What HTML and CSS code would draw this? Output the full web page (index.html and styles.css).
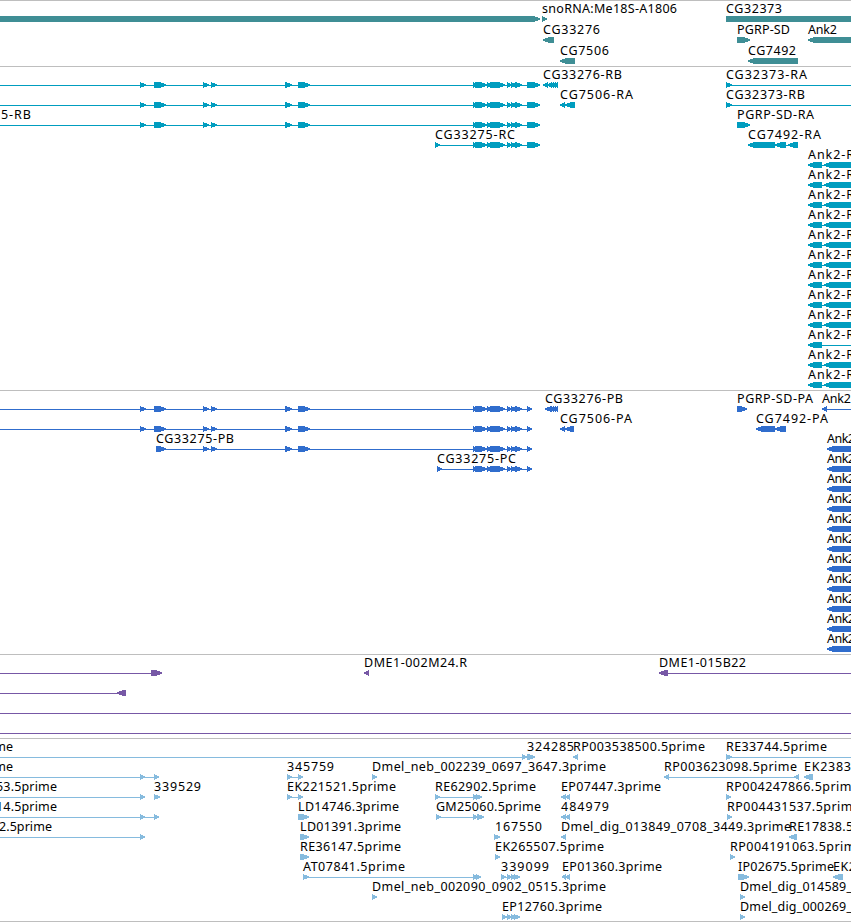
FILE: index.html
```html
<!DOCTYPE html>
<html lang="en">
<head>
  <meta charset="UTF-8">
  <meta name="viewport" content="width=device-width, initial-scale=1.0">
  <title>Genome Browser</title>
  <link rel="stylesheet" href="styles.css">
</head>
<body>
  <main class="browser">
    <svg class="track genes" id="genes"></svg>
    <svg class="track transcripts" id="transcripts"></svg>
    <svg class="track cds" id="cds"></svg>
    <svg class="track bacs" id="bacs"></svg>
    <svg class="track ests" id="ests"></svg>
  </main>
  <script src="tracks.js"></script>
</body>
</html>
```

FILE: styles.css
```css
body {
  margin: 0;
  background: #fff;
  overflow: hidden;
}

.browser {
  display: flex;
  flex-direction: column;
  width: 851px;
  height: 922px;
  box-sizing: border-box;
  border-bottom: 1px solid #bebebe;
}

.track {
  display: block;
  flex: none;
  box-sizing: border-box;
  width: 100%;
  border-top: 1px solid #bebebe;
  overflow: hidden;
}

.track text {
  font-family: "Noto Sans", "DejaVu Sans", sans-serif;
  font-size: 12.5px;
  fill: #000;
}

.track path {
  shape-rendering: crispEdges;
}

.genes {
  height: 66px;
  fill: #3f8e95;
}

.transcripts {
  height: 324px;
  fill: #009dbf;
}

.cds {
  height: 264px;
  fill: #306dcd;
}

.bacs {
  height: 84px;
  fill: #7758a6;
}

.ests {
  height: 183px;
  fill: #86bbde;
}
```

FILE: tracks.js
```js
const SVG = "http://www.w3.org/2000/svg";

// parts that run past the edges of the view
const L = [-30, 5];
const R = [880, 5];

// exons shared by the CG33275 models
const start = [[140, 6], [154, 12]];
const middle = [[203, 6], [211, 6], [285, 7], [298, 12]];
const end = [[473, 6], [475, 12], [487, 5], [490, 15], [507, 5], [511, 6], [515, 7]];

// feature: [row, direction, parts, label, label x, label width]
const genes = [
  [0, ">", [[-30, 570]]],
  [0, ">", [[542, 5]], "snoRNA:Me18S-A1806", 542, 135],
  [0, ">", [[726, 200]], "CG32373", 726, 56],
  [1, "<", [[543, 11]], "CG33276", 543, 57],
  [1, ">", [[737, 13]], "PGRP-SD", 737, 53],
  [1, "<", [[808, 100]], "Ank2", 808, 29],
  [2, "<", [[560, 15]], "CG7506", 560, 49],
  [2, "<", [[748, 50]], "CG7492", 748, 48]
];

const rna = [L, ...start, ...middle, ...end, [527, 13]];
const transcripts = [
  [0, ">", rna],
  [1, ">", rna],
  [2, ">", rna, "5-RB", 1, 30],
  [3, ">", [[435, 5], ...end, [527, 13]], "CG33275-RC", 435, 80],
  [0, "<", [[543, 5], [547, 5], [551, 3], [553, 3], [555, 3]], "CG33276-RB", 543, 79],
  [1, "<", [[560, 5], [565, 10]], "CG7506-RA", 560, 73],
  [0, ">", [[726, 6], R], "CG32373-RA", 726, 81],
  [1, ">", [[726, 6], R], "CG32373-RB", 726, 79],
  [2, ">", [[737, 13]], "PGRP-SD-RA", 737, 77],
  [3, "<", [[748, 27], [775, 11], [788, 10]], "CG7492-RA", 748, 73]
];
for (let row = 4; row < 16; row++) {
  const rest = row === 13 ? R : [824, 100];
  transcripts.push([row, "<", [[808, 14], rest], "Ank2-R", 808, 46]);
}

const cds = [
  [0, ">", [L, ...start, ...middle, ...end, [527, 5]]],
  [1, ">", [L, ...start, ...middle, ...end, [527, 5]]],
  [2, ">", [[156, 10], ...middle, ...end, [527, 5]], "CG33275-PB", 156, 78],
  [3, ">", [[437, 5], ...end, [527, 5]], "CG33275-PC", 437, 79],
  [0, "<", [[545, 6], [549, 3], [551, 3], [553, 3], [555, 3]], "CG33276-PB", 545, 78],
  [1, "<", [[560, 5], [565, 9]], "CG7506-PA", 560, 72],
  [0, ">", [[737, 10]], "PGRP-SD-PA", 737, 76],
  [0, "<", [[822, 5], R], "Ank2", 822, 29],
  [1, "<", [[756, 19], [775, 11]], "CG7492-PA", 756, 72]
];
for (let row = 2; row < 13; row++) {
  cds.push([row, "<", [[827, 100]], "Ank2", 827, 28]);
}

const bacs = [
  [0, ">", [L, [151, 11]]],
  [0, "<", [[364, 5]], "DME1-002M24.R", 364, 103],
  [0, "<", [[659, 9], R], "DME1-015B22", 659, 87],
  [1, "<", [L, [117, 9]]],
  [2, "<", [L, R]],
  [3, "<", [L, R]]
];

const ests = [
  [0, ">", [L, [522, 5], [527, 8]], "prime", -22, 35],
  [0, ">", [], "324285", 527, 47],
  [0, "<", [[573, 5]], "RP003538500.5prime", 573, 132],
  [0, ">", [[726, 6], R], "RE33744.5prime", 726, 101],

  [1, ">", [L, [140, 5], [154, 5]], "prime", -22, 35],
  [1, ">", [[287, 5], [298, 5]], "345759", 287, 47],
  [1, ">", [[372, 5]], "Dmel_neb_002239_0697_3647.3prime", 372, 234],
  [1, "<", [[664, 5], [794, 5]], "RP003623098.5prime", 664, 133],
  [1, "<", [[804, 9]], "EK2383", 804, 47],

  [2, ">", [L, [140, 5]], "53.5prime", -4, 61],
  [2, ">", [[154, 6]], "339529", 154, 47],
  [2, ">", [[287, 5], [298, 5]], "EK221521.5prime", 287, 109],
  [2, ">", [[435, 5], [473, 5], [476, 6]], "RE62902.5prime", 435, 101],
  [2, "<", [[561, 5], [565, 5]], "EP07447.3prime", 561, 100],
  [2, ">", [[726, 5]], "RP004247866.5prime", 726, 133],

  [3, ">", [L, [140, 5], [154, 5]], "14.5prime", -4, 61],
  [3, ">", [[298, 11]], "LD14746.3prime", 298, 101],
  [3, ">", [[436, 5], [473, 5], [477, 7]], "GM25060.5prime", 436, 105],
  [3, "<", [[561, 5], [565, 5]], "484979", 561, 48],
  [3, ">", [[727, 5]], "RP004431537.5prime", 727, 133],

  [4, ">", [L, [140, 5]], "2.5prime", -1, 53],
  [4, ">", [[300, 9]], "LD01391.3prime", 300, 101],
  [4, ">", [[494, 6]], "167550", 495, 47],
  [4, "<", [[561, 5]], "Dmel_dig_013849_0708_3449.3prime", 561, 230],
  [4, "<", [[789, 8]], "RE17838.5prime", 789, 101],

  [5, ">", [[300, 9]], "RE36147.5prime", 300, 101],
  [5, ">", [[495, 5]], "EK265507.5prime", 495, 109],
  [5, ">", [[730, 5]], "RP004191063.5prime", 730, 133],

  [6, ">", [[303, 6], [473, 5], [476, 5]], "AT07841.5prime", 303, 102],
  [6, ">", [[501, 5], [507, 5], [511, 5], [514, 6]], "339099", 501, 48],
  [6, "<", [[562, 4], [565, 5]], "EP01360.3prime", 562, 100],
  [6, ">", [[738, 11]], "IP02675.5prime", 738, 96],
  [6, "<", [[833, 10]], "EK2", 833, 23],

  [7, ">", [[372, 5]], "Dmel_neb_002090_0902_0515.3prime", 372, 234],
  [7, ">", [[740, 5]], "Dmel_dig_014589_", 740, 112],

  [8, ">", [[502, 5], [507, 5], [511, 5], [514, 6]], "EP12760.3prime", 502, 100],
  [8, ">", [[740, 5]], "Dmel_dig_000269_", 740, 112]
];

// box with a 1px wide point, 6px high, always wound clockwise
function arrow(x, w, y, dir) {
  const tip = Math.min(w, 6);
  if (dir === ">") {
    return `M${x} ${y}h${w - tip}l${tip} 2.4v1.2l${-tip} 2.4h${tip - w}z`;
  }
  return `M${x + tip} ${y}h${w - tip}v6h${tip - w}l${-tip} -2.4v-1.2z`;
}

function drawTrack(id, features, pitch) {
  const svg = document.getElementById(id);
  for (const [row, dir, parts, label, x, width] of features) {
    const y = 15 + row * pitch;
    if (parts.length) {
      const last = parts[parts.length - 1];
      let d = parts.map(p => arrow(p[0], p[1], y, dir)).join("");
      if (parts.length > 1) {
        d += `M${parts[0][0]} ${y + 3}H${last[0] + 2}v1H${parts[0][0]}z`;
      }
      const path = document.createElementNS(SVG, "path");
      path.setAttribute("d", d);
      svg.appendChild(path);
    }
    if (label) {
      const text = document.createElementNS(SVG, "text");
      text.setAttribute("x", x);
      text.setAttribute("y", y - 3);
      text.setAttribute("textLength", width);
      text.textContent = label;
      svg.appendChild(text);
    }
  }
}

drawTrack("genes", genes, 21);
drawTrack("transcripts", transcripts, 20);
drawTrack("cds", cds, 20);
drawTrack("bacs", bacs, 20);
drawTrack("ests", ests, 20);
```
